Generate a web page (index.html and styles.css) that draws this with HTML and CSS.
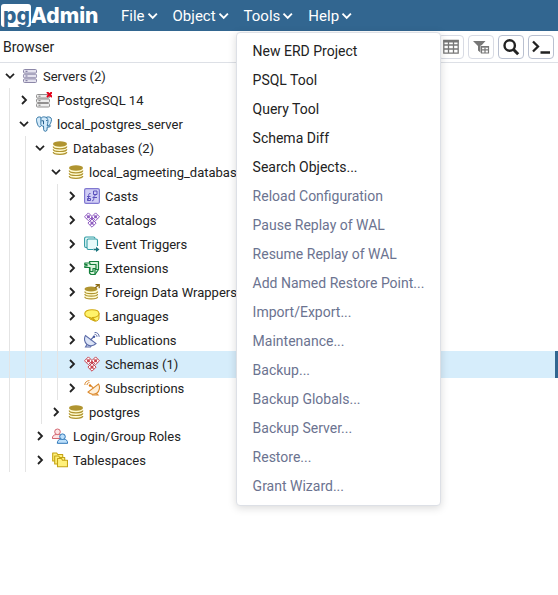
FILE: index.html
```html
<!DOCTYPE html>
<html lang="en">
<head>
<meta charset="utf-8">
<title>pgAdmin</title>
<link rel="stylesheet" href="styles.css">
</head>
<body>
<svg class="defs" aria-hidden="true">
  <symbol id="caret" viewBox="0 0 14 14"><path d="m3.500 4.700 4.200 4.200 4.200-4.200" fill="none" stroke="currentColor" stroke-width="1.900"/></symbol>
  <symbol id="down" viewBox="0 0 16 16"><path d="m4 5.800 4 4 4-4" fill="none" stroke="currentColor" stroke-width="1.800"/></symbol>
  <symbol id="right" viewBox="0 0 16 16"><path d="m6 4 4 4-4 4" fill="none" stroke="currentColor" stroke-width="1.800"/></symbol>
  <symbol id="db" viewBox="0 0 16 16">
    <path d="M1.500 4v8c0 1.500 3 2.500 6.500 2.500s6.500-1 6.500-2.500V4z" fill="#fffbd0"/>
    <ellipse cx="8" cy="4" rx="7" ry="2.700" fill="#b09430"/>
    <path d="M1.200 6.500c0 1.400 3 2.300 6.800 2.300s6.800-.9 6.800-2.300M1.200 9.200c0 1.400 3 2.300 6.800 2.300s6.800-.9 6.800-2.300M1.200 12c0 1.400 3 2.300 6.800 2.300s6.800-.9 6.800-2.300" fill="none" stroke="#b09430" stroke-width="1.200"/>
  </symbol>
  <symbol id="server" viewBox="0 0 16 16">
    <g fill="#e4e2ee" stroke="#8c87a8"><rect x="1.500" y="1.500" width="13" height="3.600" rx="1"/><rect x="1.500" y="6.200" width="13" height="3.600" rx="1"/><rect x="1.500" y="10.900" width="13" height="3.600" rx="1"/></g>
    <path d="M3.500 3.300h2M3.500 8h2M3.500 12.700h2" stroke="#706a94"/>
  </symbol>
  <symbol id="diamonds" viewBox="0 0 16 16">
    <g fill="#fff" stroke="currentColor"><path d="M4.400.9 8.300 4.800 4.400 8.700.5 4.800z"/><path d="M11.600.9 15.500 4.800l-3.900 3.900-3.900-3.900z"/><path d="m8 7 4.100 4.100L8 15.200l-4.100-4.100z"/></g>
    <g fill="none" stroke="currentColor" stroke-width=".8"><path d="m2.500 2.900 3.900 3.900M6.400 2.900 2.500 6.800M9.600 2.900l3.900 3.900M13.500 2.900 9.600 6.800M6 9.100l4 4M10 9.100l-4 4"/></g>
    <g fill="currentColor"><circle cx="4.400" cy="4.800" r="1.500"/><circle cx="11.600" cy="4.800" r="1.500"/><circle cx="8" cy="11.100" r="1.600"/><circle cx="8" cy="7" r="1.200"/></g>
  </symbol>
</svg>

<header class="navbar">
  <a class="logo" href="#"><span class="logo-pg">pg</span><span class="logo-admin">Admin</span></a>
  <nav>
    <ul class="menubar">
      <li><button type="button">File<svg><use href="#caret"/></svg></button></li>
      <li><button type="button">Object<svg><use href="#caret"/></svg></button></li>
      <li><button type="button" aria-expanded="true">Tools<svg><use href="#caret"/></svg></button>
        <div class="dropdown" role="menu">
          <button type="button" role="menuitem">New ERD Project</button>
          <button type="button" role="menuitem">PSQL Tool</button>
          <button type="button" role="menuitem">Query Tool</button>
          <button type="button" role="menuitem">Schema Diff</button>
          <button type="button" role="menuitem">Search Objects...</button>
          <button type="button" role="menuitem" disabled>Reload Configuration</button>
          <button type="button" role="menuitem" disabled>Pause Replay of WAL</button>
          <button type="button" role="menuitem" disabled>Resume Replay of WAL</button>
          <button type="button" role="menuitem" disabled>Add Named Restore Point...</button>
          <button type="button" role="menuitem" disabled>Import/Export...</button>
          <button type="button" role="menuitem" disabled>Maintenance...</button>
          <button type="button" role="menuitem" disabled>Backup...</button>
          <button type="button" role="menuitem" disabled>Backup Globals...</button>
          <button type="button" role="menuitem" disabled>Backup Server...</button>
          <button type="button" role="menuitem" disabled>Restore...</button>
          <button type="button" role="menuitem" disabled>Grant Wizard...</button>
        </div>
      </li>
      <li><button type="button">Help<svg><use href="#caret"/></svg></button></li>
    </ul>
  </nav>
</header>

<div class="panel-head">
  <h1>Browser</h1>
  <div class="tools">
    <button type="button" class="off" aria-label="View data"><svg width="18" height="16" viewBox="0 0 18 16"><path d="M1.800 1.500h14.400v12.700H1.800zM1.800 6h14.400M1.800 10h14.400M6.500 2v12M11.500 2v12" fill="none" stroke="currentColor" stroke-width="1.300"/><path d="M1.500 1h15v2.500h-15z" fill="currentColor"/></svg></button>
    <button type="button" class="off" aria-label="Filtered rows"><svg width="18" height="16" viewBox="0 0 18 16"><path d="M1 2h12.500L9 7v7l-3-2.500V7z" fill="currentColor"/><path d="M8.500 6.500h9v8.500h-9z" fill="#fff"/><path d="M9.500 7.500h7v6.500h-7zM9.500 10.800h7M13 8.500V14" fill="none" stroke="currentColor" stroke-width="1.200"/><path d="M9 7h8v1.700H9z" fill="currentColor"/></svg></button>
    <button type="button" aria-label="Search objects"><svg width="18" height="18" viewBox="0 0 18 18"><circle cx="7.700" cy="7.500" r="5.200" fill="none" stroke="currentColor" stroke-width="2.400"/><path d="m11.500 11.500 4.700 4.700" stroke="currentColor" stroke-width="3"/></svg></button>
    <button type="button" aria-label="PSQL tool"><svg width="20" height="16" viewBox="0 0 20 16"><path d="m2 2.500 5 5-5 5M9.500 13.500H19" fill="none" stroke="currentColor" stroke-width="2.300"/></svg></button>
  </div>
</div>

<main>
<ul class="tree">
  <li>
    <div class="row"><svg><use href="#down"/></svg><svg><use href="#server"/></svg><span>Servers (2)</span></div>
    <ul>
      <li><div class="row"><svg><use href="#right"/></svg><svg viewBox="0 0 16 16"><g fill="#eee" stroke="#929090"><rect x=".5" y="2.500" width="13" height="3.500" rx="1"/><rect x=".5" y="7" width="13" height="3.500" rx="1"/><rect x=".5" y="11.500" width="13" height="3.500" rx="1"/></g><path d="M2.500 4.200h2M2.500 8.700h2M2.500 13.200h2" stroke="#777"/><path d="m11 0 5 5m0-5-5 5" stroke="#e2001a" stroke-width="2"/></svg><span>PostgreSQL 14</span></div></li>
      <li>
        <div class="row"><svg><use href="#down"/></svg><svg viewBox="0 0 16 16"><g fill="#d3eafa" stroke="#3778a6" stroke-linejoin="round"><path d="M10.500 1.200c2.500-.9 5 .2 5 2.200 0 2.500-1.500 5.500-3 6.600l-2-1z"/><path d="M5 1.300C2.500.3.500 1.300.5 3.700c0 2.300 1.600 7.200 3 7.200 1 0 1.700-1.200 2.600-2.200z"/><path d="M5 2.500C5.500 1.200 7 .7 8.500.9c2.300.2 3.500 2 3.500 4.300 0 2-.8 2.700-.8 4.600 1 .5 2.800.1 3.500 0-.5 1.200-2 1.500-3.500 1.400L11 14c-.3 1.700-3 1.800-3.300-.2L7.500 10C6 10.500 4.600 9.300 4.800 7.600z"/></g><path d="M5.500 4.800h2v3.500M10.200 4.500h1.200" fill="none" stroke="#225d8b"/></svg><span>local_postgres_server</span></div>
        <ul>
          <li>
            <div class="row"><svg><use href="#down"/></svg><svg><use href="#db"/></svg><span>Databases (2)</span></div>
            <ul>
              <li>
                <div class="row"><svg><use href="#down"/></svg><svg><use href="#db"/></svg><span>local_agmeeting_database</span></div>
                <ul>
                  <li><div class="row"><svg><use href="#right"/></svg><svg viewBox="0 0 16 16"><rect x=".6" y=".6" width="14.800" height="14.800" rx="1.500" fill="#d0cdf5" stroke="#8078d0" stroke-width="1.200"/><path d="M6.500 5.500C4.500 5 4.700 7 4.500 9s0 3.500-1.500 3M3 8.500h3.500M11.500 7.500c-2 0-1.500 1.500-1.700 3s-.2 2.500-1.800 2.200M8.500 9.500H13M3.500 10.500h3v2h-3zM9.500 3h3.500v3.500H9.500z" fill="none" stroke="#5b50bc"/></svg><span>Casts</span></div></li>
                  <li><div class="row purple"><svg><use href="#right"/></svg><svg><use href="#diamonds"/></svg><span>Catalogs</span></div></li>
                  <li><div class="row"><svg><use href="#right"/></svg><svg viewBox="0 0 16 16"><path d="M3 11.500H2A1.500 1.500 0 0 1 .6 10V2.500A1.500 1.500 0 0 1 2 1h7.500A1.500 1.500 0 0 1 11 2.500" fill="#e8fafa" stroke="#309ba3" stroke-width="1.100"/><path d="M9 13.500H4.500A1.500 1.500 0 0 1 3 12V4.500A1.500 1.500 0 0 1 4.500 3H12a1.500 1.500 0 0 1 1.500 1.500V10" fill="#e8fafa" stroke="#309ba3" stroke-width="1.100"/><path d="M9.500 13.500h4" stroke="#18747c" stroke-width="1.600"/><path d="m12 10.700 3.500 2.800-3.500 2.500z" fill="#18747c"/></svg><span>Event Triggers</span></div></li>
                  <li><div class="row"><svg><use href="#right"/></svg><svg viewBox="0 0 16 16"><g fill="#dbf4dd" stroke="#15803c" stroke-width="1.200" stroke-linejoin="round"><path d="M5.500 1.500h9v8L11 14.500H7L5.500 13z"/><path d="M.8 3H6v1.500h6v4H9v3H6v-4H.8V6H3V4.700H.8z"/><path d="M14.500 9.500H11v5" fill="none"/></g></svg><span>Extensions</span></div></li>
                  <li><div class="row"><svg><use href="#right"/></svg><svg viewBox="0 0 16 16"><path d="M1 5v8c0 1.500 3 2.300 6.300 2.300s6.300-.8 6.300-2.300V5z" fill="#fffbd0"/><ellipse cx="7" cy="5" rx="6.500" ry="2.400" fill="#b09430"/><path d="M.8 7.500c0 1.300 3 2.100 6.400 2.100s6.400-.8 6.400-2.100M.8 10.100c0 1.300 3 2.100 6.400 2.100s6.400-.8 6.400-2.100M.8 12.800c0 1.300 3 2.100 6.400 2.100s6.400-.8 6.400-2.100" fill="none" stroke="#b09430" stroke-width="1.200"/><path d="m11 4 3.500-3M11.500.7h3.700v3.600" fill="none" stroke="#8c6b14" stroke-width="1.300"/></svg><span>Foreign Data Wrappers</span></div></li>
                  <li><div class="row"><svg><use href="#right"/></svg><svg viewBox="0 0 16 16"><path d="M10.500 13c2.500.5 4.500-1 4.500-3V5H3l3 6z" fill="#fff36a" stroke="#c9a00a"/><path d="M8 1.700c4.200 0 7 1.500 7 3.700s-2.800 4-6.500 4.200L11.500 13 6 9.600C3 9.400.8 7.800.8 5.500c0-2.200 3-3.800 7.200-3.800z" fill="#fff36a" stroke="#d0a80f" stroke-width="1.100"/></svg><span>Languages</span></div></li>
                  <li><div class="row"><svg><use href="#right"/></svg><svg viewBox="0 0 16 16"><g fill="#dce4f7" stroke="#5c6ca8" stroke-width="1.100"><path d="M3.500 11.500 1.500 15h5l1-2"/><path d="M1.500 3.500c-1.800 3-1 7 1.500 9s6.500 1.500 9-1z"/><path d="m6.500 8 3-3"/></g><circle cx="10" cy="4.700" r="1.200" fill="#44569d"/><path d="M10.500 2.300c1.500 0 2.500.9 2.500 2.500M10.500.3c2.700 0 4.700 1.800 4.700 4.500" fill="none" stroke="#5c6ca8"/></svg><span>Publications</span></div></li>
                  <li><div class="row red selected"><svg><use href="#right"/></svg><svg><use href="#diamonds"/></svg><span>Schemas (1)</span></div></li>
                  <li><div class="row"><svg><use href="#right"/></svg><svg viewBox="0 0 16 16"><g fill="#fff0da" stroke="#dc8c32" stroke-width="1.100"><path d="M11.500 12.500 14 15H8.500l-1-2"/><path d="M14.500 4c1.800 3 1 7-1.500 9s-6.500 1.500-9-1z"/><path d="m9.500 8-3-2.500"/></g><circle cx="6" cy="5.500" r="1.200" fill="#df7d12"/><path d="M5.500 2.600C4 2.600 3 3.500 3 5M5.500.6C2.800.6.800 2.400.8 5" fill="none" stroke="#dc8c32"/></svg><span>Subscriptions</span></div></li>
                </ul>
              </li>
              <li><div class="row"><svg><use href="#right"/></svg><svg><use href="#db"/></svg><span>postgres</span></div></li>
            </ul>
          </li>
          <li><div class="row"><svg><use href="#right"/></svg><svg viewBox="0 0 16 16"><g stroke-linejoin="round"><g fill="#fde4e4" stroke="#d36570"><path d="M.3 10.500C.5 8 1.500 7 4 6.500h3c2 .5 2.700 1.500 3 4z"/><circle cx="5.500" cy="3.800" r="2.800"/></g><g fill="#bde0fb" stroke="#2d76b8"><path d="M5.300 15.300C5.500 12.500 6.500 11.600 9 11h3c2.500.6 3.500 1.500 3.700 4.300z"/><circle cx="10.500" cy="8.700" r="2.800"/></g></g></svg><span>Login/Group Roles</span></div></li>
          <li><div class="row"><svg><use href="#right"/></svg><svg viewBox="0 0 16 16"><g fill="#fff17b" stroke="#c5a313" stroke-width="1.100" stroke-linejoin="round"><path d="M.7 1h4l1 1.500h5V9h-10z"/><path d="M2.700 4h4l1 1.500h5V12h-10z"/><path d="M5.500 6.500h4l1 1.700h5v6.500h-10z"/></g></svg><span>Tablespaces</span></div></li>
        </ul>
      </li>
    </ul>
  </li>
</ul>
</main>
</body>
</html>
```
FILE: styles.css
```css
* {
  box-sizing: border-box;
}

body {
  min-height: 100vh;
  margin: 0;
  background: #fff;
  color: #222;
  font-family: Roboto, "Liberation Sans", sans-serif;
  font-size: 14px;
}

ul {
  list-style: none;
  margin: 0;
  padding: 0;
}

button {
  font: inherit;
  color: inherit;
  background: none;
  border: 0;
  padding: 0;
}

.defs {
  position: absolute;
  width: 0;
  height: 0;
}

.navbar {
  display: flex;
  align-items: center;
  height: 31px;
  background: #326690;
  color: #fff;
}

.logo {
  display: flex;
  align-items: center;
  width: 113px;
  padding-left: 1px;
  color: #fff;
  font-family: Inter, sans-serif;
  font-size: 21px;
  font-weight: 800;
  line-height: 23px;
  text-decoration: none;
}

.logo-pg {
  padding: 0 1px 0 2px;
  border-radius: 3px;
  background: #fff;
  color: #326690;
}

.menubar {
  display: flex;
}

.menubar > li {
  position: relative;
  padding: 0 8px;
}

.menubar > li > button {
  display: flex;
  align-items: center;
  font-size: 15px;
  line-height: 30px;
}

.menubar svg {
  width: 14px;
  height: 14px;
  margin-right: -2px;
}

.dropdown {
  position: absolute;
  z-index: 2;
  top: 31px;
  left: 0;
  padding: 4px 0;
  border: 1px solid #dde0e6;
  border-radius: 4px;
  background: #fff;
  box-shadow: 0 2px 8px rgba(0, 0, 0, 0.15);
  color: #222;
}

.dropdown button {
  display: block;
  width: 100%;
  padding: 4px 16px;
  line-height: 21px;
  text-align: left;
  white-space: nowrap;
}

.dropdown button:disabled {
  color: #6b7390;
}

.panel-head {
  display: flex;
  align-items: center;
  justify-content: space-between;
  height: 32px;
  padding: 0 4px 0 3px;
  border-bottom: 1px solid #dde0e6;
}

h1 {
  margin: 0;
  font-size: 14px;
  font-weight: 400;
}

.tools {
  display: flex;
  gap: 4px;
}

.tools button {
  display: flex;
  align-items: center;
  justify-content: center;
  width: 26px;
  height: 24px;
  border: 1px solid #b9c0d0;
  border-radius: 4px;
}

.tools .off {
  border-color: #d8dbe4;
  color: #777;
}

.tree {
  position: relative;
  z-index: 0;
  padding: 1px 0 0 2px;
  font-size: 13px;
}

.tree ul {
  margin-left: 9px;
  padding-left: 6px;
  border-left: 1px solid #e4e4e4;
}

.tree > li > ul {
  margin-left: 7px;
}

.row {
  display: flex;
  align-items: center;
  height: 24px;
  white-space: nowrap;
}

.row svg {
  flex: none;
  width: 16px;
  height: 16px;
}

.row svg + svg {
  margin: 0 5px 0 4px;
}

.purple svg + svg {
  color: #8e5bc0;
}

.red svg + svg {
  color: #c84450;
}

.selected::before {
  content: "";
  position: absolute;
  z-index: -1;
  right: 0;
  left: 0;
  height: 27px;
  border-right: 3px solid #326690;
  background: #d6edfb;
}
```
